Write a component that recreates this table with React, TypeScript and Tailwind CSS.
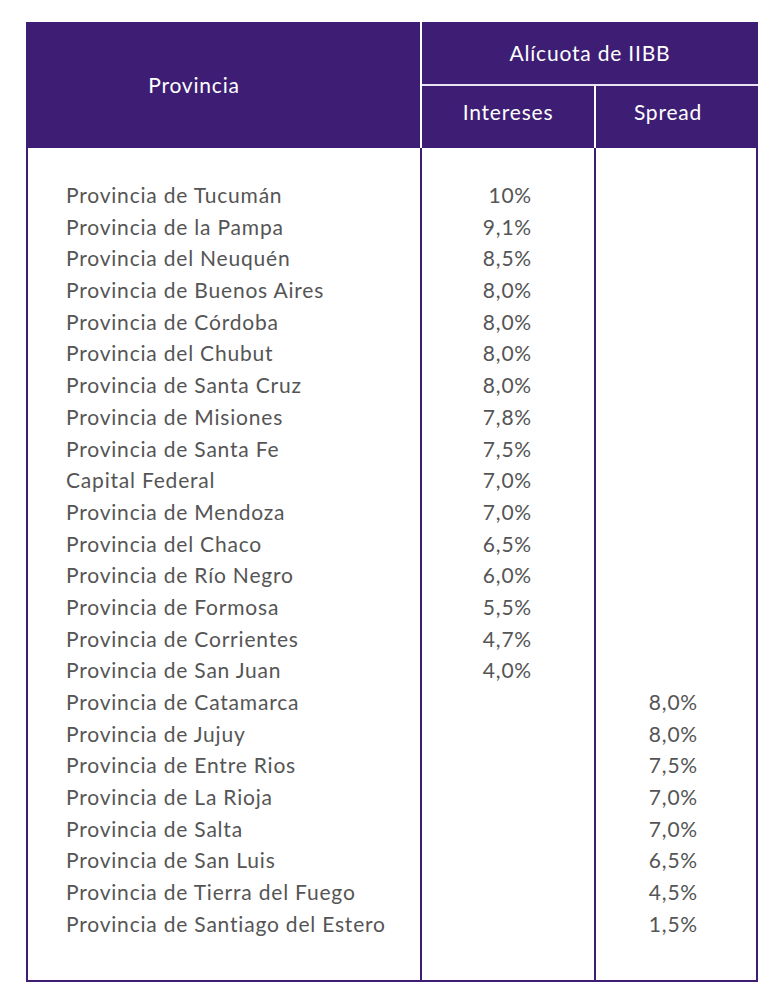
import React from "react";

const rows: { name: string; intereses?: string; spread?: string }[] = [
  { name: "Provincia de Tucumán", intereses: "10%" },
  { name: "Provincia de la Pampa", intereses: "9,1%" },
  { name: "Provincia del Neuquén", intereses: "8,5%" },
  { name: "Provincia de Buenos Aires", intereses: "8,0%" },
  { name: "Provincia de Córdoba", intereses: "8,0%" },
  { name: "Provincia del Chubut", intereses: "8,0%" },
  { name: "Provincia de Santa Cruz", intereses: "8,0%" },
  { name: "Provincia de Misiones", intereses: "7,8%" },
  { name: "Provincia de Santa Fe", intereses: "7,5%" },
  { name: "Capital Federal", intereses: "7,0%" },
  { name: "Provincia de Mendoza", intereses: "7,0%" },
  { name: "Provincia del Chaco", intereses: "6,5%" },
  { name: "Provincia de Río Negro", intereses: "6,0%" },
  { name: "Provincia de Formosa", intereses: "5,5%" },
  { name: "Provincia de Corrientes", intereses: "4,7%" },
  { name: "Provincia de San Juan", intereses: "4,0%" },
  { name: "Provincia de Catamarca", spread: "8,0%" },
  { name: "Provincia de Jujuy", spread: "8,0%" },
  { name: "Provincia de Entre Rios", spread: "7,5%" },
  { name: "Provincia de La Rioja", spread: "7,0%" },
  { name: "Provincia de Salta", spread: "7,0%" },
  { name: "Provincia de San Luis", spread: "6,5%" },
  { name: "Provincia de Tierra del Fuego", spread: "4,5%" },
  { name: "Provincia de Santiago del Estero", spread: "1,5%" },
];

const App = () => {
  return (
    <div className="min-h-screen bg-white pt-[22px] pl-[26px] font-['Lato',sans-serif] tracking-[0.8px]">
      <div className="w-[732px] border-2 border-t-0 border-[#3d1e74]">
        {/* header */}
        <div className="flex h-[126px] bg-[#3d1e74] text-white text-[21px] -mx-[2px]">
          <div className="flex w-[394px] items-center justify-center pr-[58px]">
            Provincia
          </div>
          <div className="flex flex-1 flex-col border-l-2 border-white">
            <div className="flex h-[64px] items-center justify-center border-b-2 border-[#e8e2f2]">
              Alícuota de IIBB
            </div>
            <div className="flex flex-1">
              <div className="flex w-[172px] items-center justify-center pb-[10px]">
                Intereses
              </div>
              <div className="flex flex-1 items-center justify-center border-l-2 border-white pr-[18px] pb-[10px]">
                Spread
              </div>
            </div>
          </div>
        </div>

        {/* body */}
        <div className="flex text-[21px] leading-[31.7px] text-[#555555]">
          <div className="w-[392px] pl-[38px] pt-[31px] pb-[40px]">
            {rows.map((r) => (
              <div key={r.name} className="h-[31.7px] whitespace-nowrap">
                {r.name}
              </div>
            ))}
          </div>
          <div className="w-[174px] border-l-2 border-[#3d1e74] pr-[62px] pt-[31px] pb-[40px] text-right">
            {rows.map((r) => (
              <div key={r.name} className="h-[31.7px]">
                {r.intereses ?? ""}
              </div>
            ))}
          </div>
          <div className="flex-1 border-l-2 border-[#3d1e74] pr-[58px] pt-[31px] pb-[40px] text-right">
            {rows.map((r) => (
              <div key={r.name} className="h-[31.7px]">
                {r.spread ?? ""}
              </div>
            ))}
          </div>
        </div>
      </div>
    </div>
  );
};

export default App;
